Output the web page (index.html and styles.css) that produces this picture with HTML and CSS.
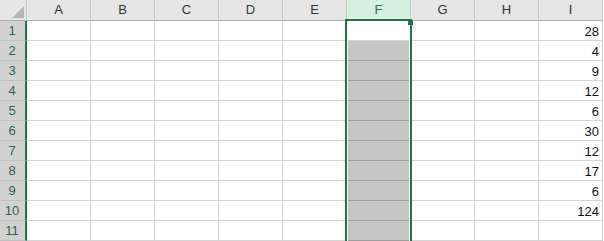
FILE: index.html
```html
<!DOCTYPE html>
<html lang="en">
<head>
    <meta charset="UTF-8">
    <title>Sheet</title>
    <link rel="stylesheet" href="styles.css">
</head>
<body>
    <div class="sheet">
        <div class="row head">
            <div class="corner">
                <svg width="27" height="21" viewBox="0 0 27 21"><polygon points="24,6 24,18 12,18" fill="#b4b4b4"/></svg>
            </div>
            <div class="col">A</div>
            <div class="col">B</div>
            <div class="col">C</div>
            <div class="col">D</div>
            <div class="col">E</div>
            <div class="col on">F</div>
            <div class="col">G</div>
            <div class="col">H</div>
            <div class="col">I</div>
        </div>
        <div class="row">
            <div class="num">1</div>
            <div class="cell"></div><div class="cell"></div><div class="cell"></div><div class="cell"></div><div class="cell"></div>
            <div class="cell"></div>
            <div class="cell"></div><div class="cell"></div>
            <div class="cell val">28</div>
        </div>
        <div class="row">
            <div class="num">2</div>
            <div class="cell"></div><div class="cell"></div><div class="cell"></div><div class="cell"></div><div class="cell"></div>
            <div class="cell picked"></div>
            <div class="cell"></div><div class="cell"></div>
            <div class="cell val">4</div>
        </div>
        <div class="row">
            <div class="num">3</div>
            <div class="cell"></div><div class="cell"></div><div class="cell"></div><div class="cell"></div><div class="cell"></div>
            <div class="cell picked"></div>
            <div class="cell"></div><div class="cell"></div>
            <div class="cell val">9</div>
        </div>
        <div class="row">
            <div class="num">4</div>
            <div class="cell"></div><div class="cell"></div><div class="cell"></div><div class="cell"></div><div class="cell"></div>
            <div class="cell picked"></div>
            <div class="cell"></div><div class="cell"></div>
            <div class="cell val">12</div>
        </div>
        <div class="row">
            <div class="num">5</div>
            <div class="cell"></div><div class="cell"></div><div class="cell"></div><div class="cell"></div><div class="cell"></div>
            <div class="cell picked"></div>
            <div class="cell"></div><div class="cell"></div>
            <div class="cell val">6</div>
        </div>
        <div class="row">
            <div class="num">6</div>
            <div class="cell"></div><div class="cell"></div><div class="cell"></div><div class="cell"></div><div class="cell"></div>
            <div class="cell picked"></div>
            <div class="cell"></div><div class="cell"></div>
            <div class="cell val">30</div>
        </div>
        <div class="row">
            <div class="num">7</div>
            <div class="cell"></div><div class="cell"></div><div class="cell"></div><div class="cell"></div><div class="cell"></div>
            <div class="cell picked"></div>
            <div class="cell"></div><div class="cell"></div>
            <div class="cell val">12</div>
        </div>
        <div class="row">
            <div class="num">8</div>
            <div class="cell"></div><div class="cell"></div><div class="cell"></div><div class="cell"></div><div class="cell"></div>
            <div class="cell picked"></div>
            <div class="cell"></div><div class="cell"></div>
            <div class="cell val">17</div>
        </div>
        <div class="row">
            <div class="num">9</div>
            <div class="cell"></div><div class="cell"></div><div class="cell"></div><div class="cell"></div><div class="cell"></div>
            <div class="cell picked"></div>
            <div class="cell"></div><div class="cell"></div>
            <div class="cell val">6</div>
        </div>
        <div class="row">
            <div class="num">10</div>
            <div class="cell"></div><div class="cell"></div><div class="cell"></div><div class="cell"></div><div class="cell"></div>
            <div class="cell picked"></div>
            <div class="cell"></div><div class="cell"></div>
            <div class="cell val">124</div>
        </div>
        <div class="row">
            <div class="num">11</div>
            <div class="cell"></div><div class="cell"></div><div class="cell"></div><div class="cell"></div><div class="cell"></div>
            <div class="cell picked"></div>
            <div class="cell"></div><div class="cell"></div>
            <div class="cell"></div>
        </div>

        <!-- selected range F1:F11 -->
        <div class="selection"><span class="handle"></span></div>
    </div>
</body>
</html>
```

FILE: styles.css
```css
body {
    margin: 0;
    background: #ffffff;
    font-family: "Liberation Sans", Arial, sans-serif;
    font-size: 13px;
}
.sheet {
    position: relative;
    width: 604px;
    height: 241px;
    overflow: hidden;
}
.row {
    display: flex;
    height: 20px;
}
.row.head {
    height: 21px;
}
.corner {
    width: 27px;
    height: 21px;
    box-sizing: border-box;
    background: #e6e6e6;
    border-right: 1px solid #c8c8c8;
    border-bottom: 1px solid #ababab;
}
.corner svg {
    display: block;
}
.col {
    width: 64px;
    box-sizing: border-box;
    background: #e6e6e6;
    border-right: 1px solid #c6c6c6;
    border-bottom: 1px solid #ababab;
    color: #333333;
    text-align: center;
    line-height: 20px;
}
.col.on {
    background: #d3f0e0;
    color: #2f6b47;
}
.num {
    width: 27px;
    box-sizing: border-box;
    background: #d2d2d2;
    border-right: 2px solid #217346;
    border-bottom: 1px solid #c0c0c0;
    color: #2f5f45;
    text-align: center;
    line-height: 20px;
    padding-right: 1px;
}
.cell {
    width: 64px;
    box-sizing: border-box;
    border-right: 1px solid #d4d4d4;
    border-bottom: 1px solid #d4d4d4;
}
.cell.picked {
    background: #c6c6c6;
    border-bottom-color: #9e9e9e;
}
.cell.val {
    text-align: right;
    padding-right: 3px;
    line-height: 21px;
    color: #111111;
}
.selection {
    position: absolute;
    left: 345px;
    top: 19px;
    width: 67px;
    height: 240px;
    box-sizing: border-box;
    border: 2px solid #217346;
    box-shadow: inset 0 0 0 1px #ffffff;
}
.handle {
    position: absolute;
    right: -3px;
    top: -1px;
    width: 5px;
    height: 5px;
    background: #217346;
}
```
